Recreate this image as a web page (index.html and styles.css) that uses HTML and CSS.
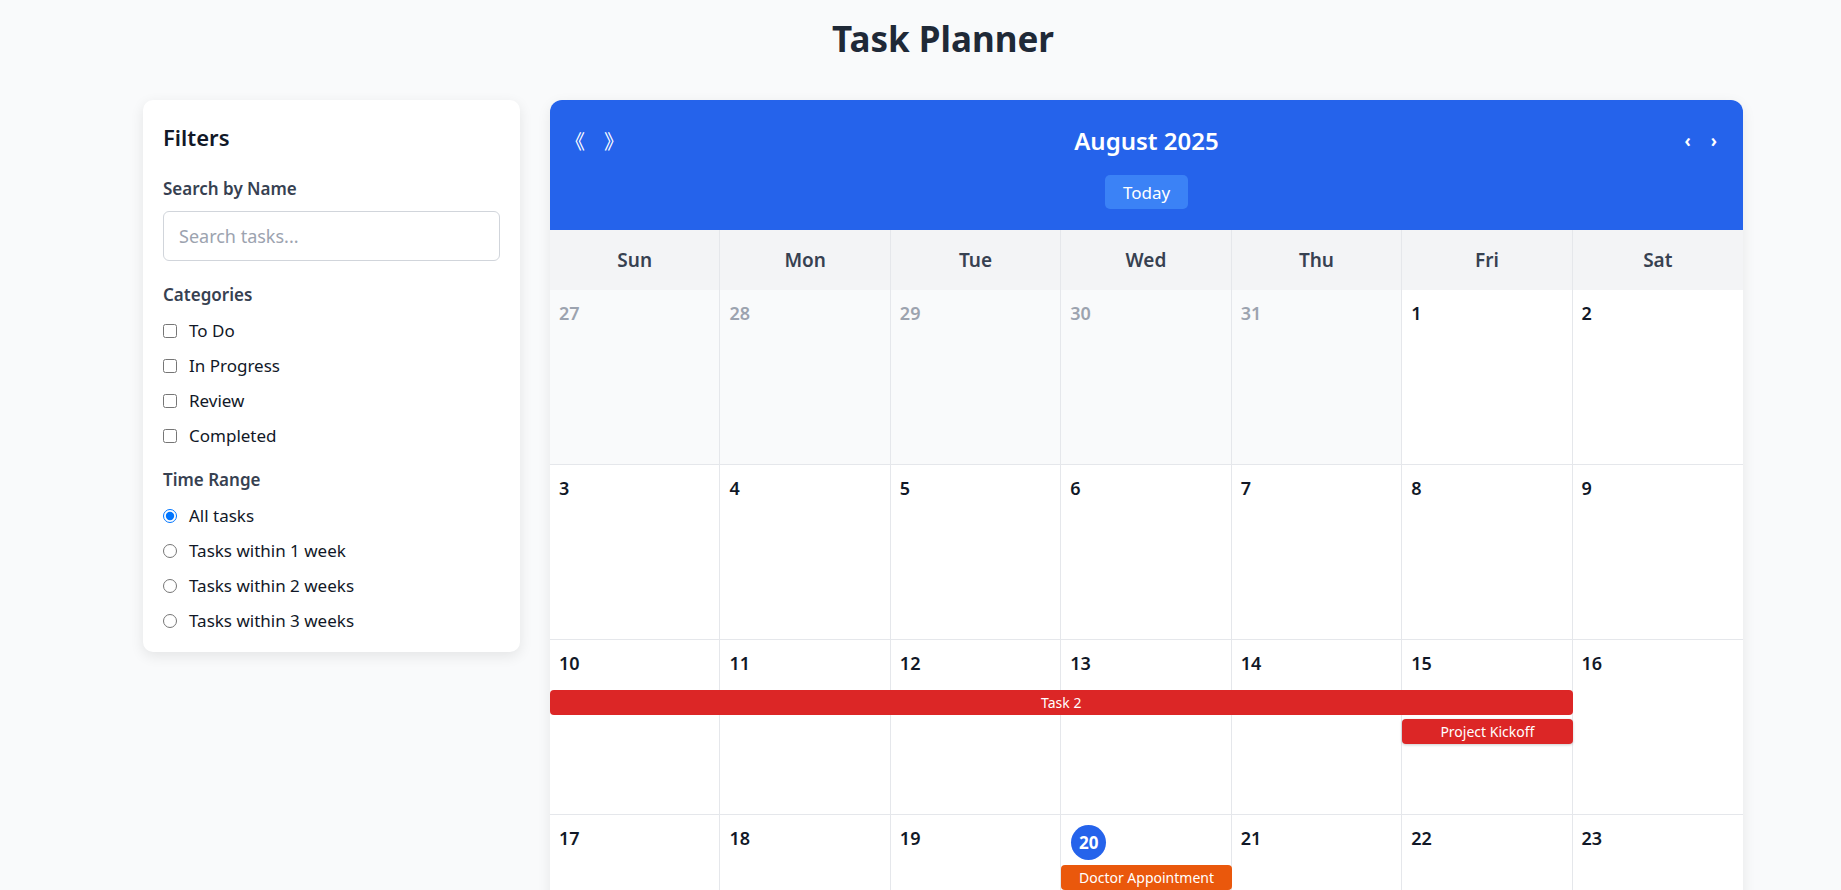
FILE: index.html
```html
<!DOCTYPE html>
<html lang="en">
<head>
<meta charset="utf-8">
<title>Task Planner</title>
<link rel="stylesheet" href="styles.css">
</head>
<body>
<div class="page">
  <h1 class="title">Task Planner</h1>
  <div class="layout">
    <aside class="filters">
      <h2 class="filters-title">Filters</h2>
      <div class="group group-search">
        <label class="group-label" for="search">Search by Name</label>
        <input id="search" class="search" type="text" placeholder="Search tasks...">
      </div>
      <div class="group">
        <div class="group-label">Categories</div>
        <label class="option"><input type="checkbox"><span>To Do</span></label>
        <label class="option"><input type="checkbox"><span>In Progress</span></label>
        <label class="option"><input type="checkbox"><span>Review</span></label>
        <label class="option"><input type="checkbox"><span>Completed</span></label>
      </div>
      <div class="group group-time">
        <div class="group-label">Time Range</div>
        <label class="option"><input type="radio" name="range" checked><span>All tasks</span></label>
        <label class="option"><input type="radio" name="range"><span>Tasks within 1 week</span></label>
        <label class="option"><input type="radio" name="range"><span>Tasks within 2 weeks</span></label>
        <label class="option"><input type="radio" name="range"><span>Tasks within 3 weeks</span></label>
      </div>
    </aside>

    <section class="calendar">
      <header class="cal-header">
        <div class="cal-top">
          <div class="nav nav-left">
            <button class="nav-btn cjk">《</button>
            <button class="nav-btn cjk">》</button>
          </div>
          <h2 class="month">August 2025</h2>
          <div class="nav nav-right">
            <button class="nav-btn small">‹</button>
            <button class="nav-btn small">›</button>
          </div>
        </div>
        <button class="today-btn">Today</button>
      </header>

      <div class="weekdays">
        <div class="wd">Sun</div><div class="wd">Mon</div><div class="wd">Tue</div><div class="wd">Wed</div><div class="wd">Thu</div><div class="wd">Fri</div><div class="wd">Sat</div>
      </div>

      <div class="week">
        <div class="cell other"><span class="day">27</span></div>
        <div class="cell other"><span class="day">28</span></div>
        <div class="cell other"><span class="day">29</span></div>
        <div class="cell other"><span class="day">30</span></div>
        <div class="cell other"><span class="day">31</span></div>
        <div class="cell"><span class="day">1</span></div>
        <div class="cell"><span class="day">2</span></div>
      </div>

      <div class="week">
        <div class="cell"><span class="day">3</span></div>
        <div class="cell"><span class="day">4</span></div>
        <div class="cell"><span class="day">5</span></div>
        <div class="cell"><span class="day">6</span></div>
        <div class="cell"><span class="day">7</span></div>
        <div class="cell"><span class="day">8</span></div>
        <div class="cell"><span class="day">9</span></div>
      </div>

      <div class="week">
        <div class="cell"><span class="day">10</span></div>
        <div class="cell"><span class="day">11</span></div>
        <div class="cell"><span class="day">12</span></div>
        <div class="cell"><span class="day">13</span></div>
        <div class="cell"><span class="day">14</span></div>
        <div class="cell"><span class="day">15</span></div>
        <div class="cell"><span class="day">16</span></div>
        <div class="events">
          <div class="event red span-sun-fri">Task 2</div>
          <div class="event red shadow col-fri row-2">Project Kickoff</div>
        </div>
      </div>

      <div class="week">
        <div class="cell"><span class="day">17</span></div>
        <div class="cell"><span class="day">18</span></div>
        <div class="cell"><span class="day">19</span></div>
        <div class="cell"><span class="day today">20</span></div>
        <div class="cell"><span class="day">21</span></div>
        <div class="cell"><span class="day">22</span></div>
        <div class="cell"><span class="day">23</span></div>
        <div class="events">
          <div class="event orange col-wed">Doctor Appointment</div>
        </div>
      </div>

      <div class="week">
        <div class="cell"><span class="day">24</span></div>
        <div class="cell"><span class="day">25</span></div>
        <div class="cell"><span class="day">26</span></div>
        <div class="cell"><span class="day">27</span></div>
        <div class="cell"><span class="day">28</span></div>
        <div class="cell"><span class="day">29</span></div>
        <div class="cell"><span class="day">30</span></div>
      </div>

      <div class="week">
        <div class="cell"><span class="day">31</span></div>
        <div class="cell other"><span class="day">1</span></div>
        <div class="cell other"><span class="day">2</span></div>
        <div class="cell other"><span class="day">3</span></div>
        <div class="cell other"><span class="day">4</span></div>
        <div class="cell other"><span class="day">5</span></div>
        <div class="cell other"><span class="day">6</span></div>
      </div>
    </section>
  </div>
</div>
</body>
</html>
```

FILE: styles.css
```css
* {
  box-sizing: border-box;
}

html, body {
  margin: 0;
  padding: 0;
}

body {
  background: #f9fafb;
  font-family: "Noto Sans", "Open Sans", sans-serif;
  color: #111827;
}

.page {
  width: 1600px;
  margin-left: 143px;
  padding-top: 17px;
  padding-bottom: 40px;
}

.title {
  margin: 0 0 40px;
  text-align: center;
  font-size: 35px;
  line-height: 43px;
  font-weight: 700;
  color: #1f2937;
}

.layout {
  display: grid;
  grid-template-columns: 377px 1fr;
  column-gap: 30px;
  align-items: start;
}

/* ---------- Filters ---------- */
.filters {
  background: #ffffff;
  border-radius: 10px;
  box-shadow: 0 4px 14px rgba(0, 0, 0, 0.09);
  padding: 23px 20px 14px;
}

.filters-title {
  margin: 0 0 26px;
  font-size: 22px;
  line-height: 28px;
  font-weight: 600;
  color: #111827;
}

.group {
  display: flex;
  flex-direction: column;
}

.group-label {
  display: block;
  font-size: 17px;
  line-height: 24px;
  font-weight: 600;
  color: #374151;
  margin-bottom: 6px;
}

.group-search .group-label {
  margin-bottom: 10px;
}

.search {
  width: 100%;
  height: 50px;
  border: 1px solid #d1d5db;
  border-radius: 6px;
  padding: 0 15px;
  font-family: inherit;
  font-size: 18px;
  color: #111827;
  background: #fff;
  margin-bottom: 22px;
  outline: none;
}

.search::placeholder {
  color: #9ca3af;
}

.group-time {
  margin-top: 15px;
}

.option {
  display: flex;
  align-items: center;
  height: 35px;
  font-size: 17px;
  line-height: 24px;
  color: #111827;
}

.option input {
  width: 14px;
  height: 14px;
  margin: 0 12px 0 0;
  flex: none;
}

/* ---------- Calendar ---------- */
.calendar {
  background: #ffffff;
  border-radius: 12px;
  overflow: hidden;
  box-shadow: 0 4px 14px rgba(0, 0, 0, 0.08);
}

.cal-header {
  background: #2563eb;
  color: #ffffff;
  padding: 24px 20px 21px;
  display: flex;
  flex-direction: column;
  align-items: center;
}

.cal-top {
  width: 100%;
  height: 34px;
  display: grid;
  grid-template-columns: 1fr auto 1fr;
  align-items: center;
}

.nav {
  display: flex;
  align-items: center;
}

.nav-left {
  justify-self: start;
  margin-left: -5px;
  gap: 19px;
}

.nav-right {
  justify-self: end;
  margin-right: 2px;
  gap: 12px;
}

.nav-btn {
  background: none;
  border: none;
  color: #ffffff;
  padding: 0 4px;
  cursor: pointer;
  font-family: "Noto Sans", sans-serif;
}

.nav-btn.cjk {
  padding: 0;
  font-family: "Noto Sans CJK SC", "Noto Sans", sans-serif;
  font-size: 20px;
  line-height: 34px;
}

.nav-btn.small {
  font-size: 17px;
  font-weight: 700;
  line-height: 34px;
}

.month {
  margin: 0;
  font-size: 24px;
  line-height: 34px;
  font-weight: 600;
  color: #ffffff;
}

.today-btn {
  margin-top: 17px;
  height: 34px;
  padding: 0 18px;
  background: #3b82f6;
  color: #ffffff;
  border: none;
  border-radius: 5px;
  font-family: inherit;
  font-size: 17px;
  cursor: pointer;
}

.weekdays {
  display: grid;
  grid-template-columns: repeat(7, 1fr);
  background: #f3f4f6;
}

.wd {
  height: 60px;
  display: flex;
  align-items: center;
  justify-content: center;
  font-size: 19px;
  font-weight: 600;
  color: #374151;
  border-right: 1px solid #e5e7eb;
}

.wd:last-child {
  border-right: none;
}

.week {
  position: relative;
  display: grid;
  grid-template-columns: repeat(7, 1fr);
  border-bottom: 1px solid #e5e7eb;
}

.cell {
  height: 174px;
  padding: 11px 11px 11px 9px;
  border-right: 1px solid #e5e7eb;
  background: #ffffff;
}

.cell:nth-child(7) {
  border-right: none;
}

.cell.other {
  background: #f9fafb;
}

.day {
  display: inline-block;
  font-size: 18px;
  line-height: 24px;
  font-weight: 600;
  color: #111827;
}

.cell.other .day {
  color: #9ca3af;
}

.day.today {
  width: 35px;
  height: 35px;
  margin: -1px 0 0 1px;
  border-radius: 50%;
  background: #2563eb;
  color: #ffffff;
  display: flex;
  align-items: center;
  justify-content: center;
  font-size: 17px;
  font-weight: 700;
}

.events {
  position: absolute;
  top: 50px;
  left: 0;
  right: 0;
  display: grid;
  grid-template-columns: repeat(7, 1fr);
  row-gap: 4px;
}

.event {
  height: 25px;
  border-radius: 4px;
  color: #ffffff;
  font-size: 14px;
  line-height: 25px;
  text-align: center;
  white-space: nowrap;
  overflow: hidden;
}

.event.red {
  background: #dc2626;
}

.event.orange {
  background: #ea580c;
}

.event.shadow {
  box-shadow: 0 1px 3px rgba(0, 0, 0, 0.2);
}

.span-sun-fri {
  grid-column: 1 / 7;
  grid-row: 1;
}

.col-fri {
  grid-column: 6;
}

.row-2 {
  grid-row: 2;
}

.col-wed {
  grid-column: 4;
  grid-row: 1;
}
```
